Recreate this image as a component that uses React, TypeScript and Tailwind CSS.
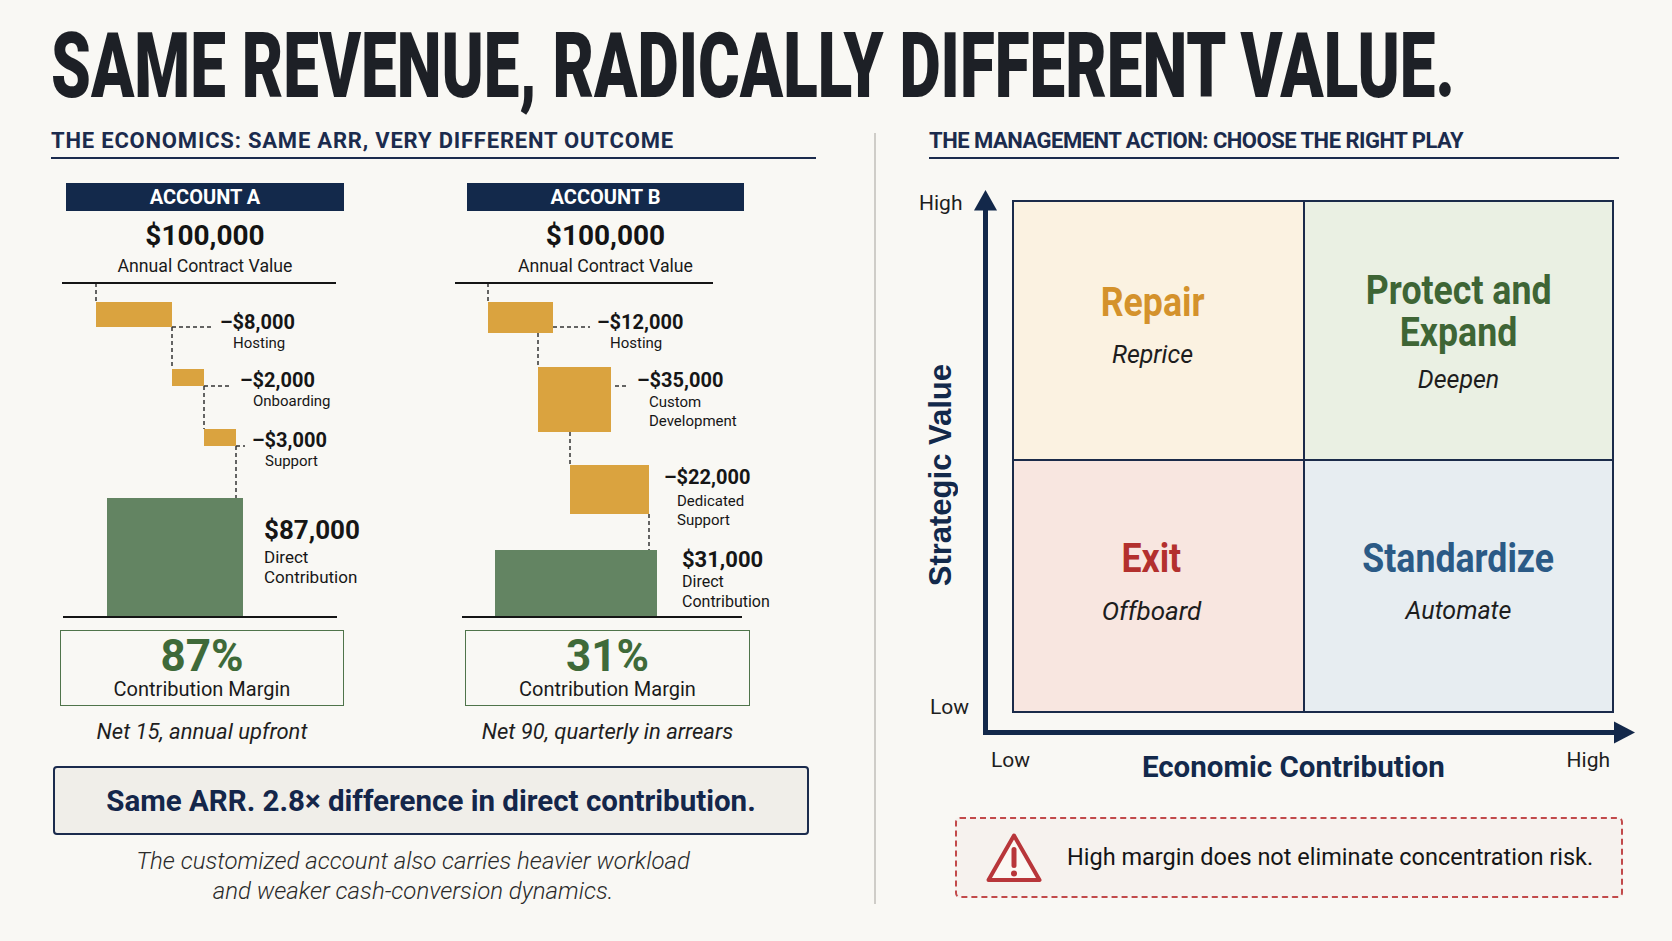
import React from "react";

type Seg = [number, number, number, number];
type Bar = { x: number; y: number; w: number; h: number; green?: boolean };
type Lbl = { x: number; y: number; t: string; s: number; b?: boolean };

type Chart = {
  vx: number;
  solid: Seg[];
  dashed: Seg[];
  bars: Bar[];
  labels: Lbl[];
};

const chartA: Chart = {
  vx: 56,
  solid: [
    [62, 283, 336, 283],
    [63, 617, 337, 617],
  ],
  dashed: [
    [96, 283, 96, 302],
    [172, 327, 212, 327],
    [172, 327, 172, 369],
    [204, 386, 230, 386],
    [204, 386, 204, 429],
    [236, 446, 245, 446],
    [236, 446, 236, 498],
  ],
  bars: [
    { x: 96, y: 302, w: 76, h: 25 },
    { x: 172, y: 369, w: 32, h: 17 },
    { x: 204, y: 429, w: 32, h: 17 },
    { x: 107, y: 498, w: 136, h: 119, green: true },
  ],
  labels: [
    { x: 220, y: 329, t: "\u2013$8,000", s: 20, b: true },
    { x: 233, y: 348, t: "Hosting", s: 15 },
    { x: 240, y: 387, t: "\u2013$2,000", s: 20, b: true },
    { x: 253, y: 406, t: "Onboarding", s: 15 },
    { x: 252, y: 447, t: "\u2013$3,000", s: 20, b: true },
    { x: 265, y: 466, t: "Support", s: 15 },
    { x: 264, y: 539, t: "$87,000", s: 26, b: true },
    { x: 264, y: 563, t: "Direct", s: 17 },
    { x: 264, y: 583, t: "Contribution", s: 17 },
  ],
};

const chartB: Chart = {
  vx: 450,
  solid: [
    [455, 283, 713, 283],
    [462, 617, 742, 617],
  ],
  dashed: [
    [488, 283, 488, 302],
    [553, 327, 590, 327],
    [538, 333, 538, 367],
    [615, 386, 627, 386],
    [570, 432, 570, 465],
    [649, 514, 649, 550],
  ],
  bars: [
    { x: 488, y: 302, w: 65, h: 31 },
    { x: 538, y: 367, w: 73, h: 65 },
    { x: 570, y: 465, w: 79, h: 49 },
    { x: 495, y: 550, w: 162, h: 67, green: true },
  ],
  labels: [
    { x: 597, y: 329, t: "\u2013$12,000", s: 20, b: true },
    { x: 610, y: 348, t: "Hosting", s: 15 },
    { x: 637, y: 387, t: "\u2013$35,000", s: 20, b: true },
    { x: 649, y: 407, t: "Custom", s: 15 },
    { x: 649, y: 426, t: "Development", s: 15 },
    { x: 664, y: 484, t: "\u2013$22,000", s: 20, b: true },
    { x: 677, y: 506, t: "Dedicated", s: 15 },
    { x: 677, y: 525, t: "Support", s: 15 },
    { x: 682, y: 567, t: "$31,000", s: 22, b: true },
    { x: 682, y: 587, t: "Direct", s: 16 },
    { x: 682, y: 607, t: "Contribution", s: 16 },
  ],
};

function Waterfall({ c }: { c: Chart }) {
  return (
    <svg
      width={340}
      height={345}
      viewBox={`${c.vx} 276 340 345`}
      className="block overflow-visible"
    >
      {c.bars.map((b, i) => (
        <rect key={i} x={b.x} y={b.y} width={b.w} height={b.h} fill={b.green ? "#638462" : "#daa33f"} />
      ))}
      {c.dashed.map((d, i) => (
        <line key={i} x1={d[0]} y1={d[1]} x2={d[2]} y2={d[3]} stroke="#333333" strokeWidth={1.5} strokeDasharray="4 3" />
      ))}
      {c.solid.map((d, i) => (
        <line key={i} x1={d[0]} y1={d[1]} x2={d[2]} y2={d[3]} stroke="#151515" strokeWidth={2.2} />
      ))}
      {c.labels.map((l, i) => (
        <text
          key={i}
          x={l.x}
          y={l.y}
          fontFamily="Roboto, sans-serif"
          fontSize={l.s}
          fontWeight={l.b ? 700 : 400}
          fill="#161616"
        >
          {l.t}
        </text>
      ))}
    </svg>
  );
}

function Account({
  name,
  chart,
  boxMl,
  boxW,
  mMl,
  mW,
  pct,
  terms,
}: {
  name: string;
  chart: Chart;
  boxMl: string;
  boxW: string;
  mMl: string;
  mW: string;
  pct: string;
  terms: string;
}) {
  return (
    <div className="w-[340px] shrink-0">
      <div className={`${boxMl} ${boxW} flex flex-col items-center`}>
        <div className="w-full h-[28px] bg-[#13294b] flex items-center justify-center text-white font-bold text-[20px] leading-none">
          {name}
        </div>
        <div className="mt-[11px] text-[28px] leading-none font-bold text-[#141414]">$100,000</div>
        <div className="mt-[8px] text-[17.7px] leading-none text-[#1a1a1a]">Annual Contract Value</div>
      </div>
      <Waterfall c={chart} />
      <div className={`${mMl} ${mW}`}>
        <div className="mt-[9px] h-[76px] border-[1.5px] border-[#4f744a] flex flex-col items-center pt-[3px]">
          <div className="text-[44px] leading-none font-bold text-[#3f6a39]">{pct}</div>
          <div className="mt-[1px] text-[20px] leading-none text-[#1a1a1a]">Contribution Margin</div>
        </div>
        <div className="mt-[15px] text-center text-[22px] leading-none italic text-[#1f1f1f] whitespace-nowrap">
          {terms}
        </div>
      </div>
    </div>
  );
}

function WarnIcon() {
  return (
    <svg width={58} height={52} viewBox="0 0 58 52" className="block shrink-0">
      <path
        d="M29 3.5 L54.5 48 L3.5 48 Z"
        fill="#fbf8f4"
        stroke="#b8363a"
        strokeWidth={4}
        strokeLinejoin="round"
      />
      <rect x={26.5} y={15} width={5} height={21} rx={2.5} fill="#b8363a" />
      <circle cx={29} cy={41.5} r={3} fill="#b8363a" />
    </svg>
  );
}

export default function App() {
  return (
    <div className="w-[1672px] h-[941px] overflow-hidden bg-[#f9f8f4] text-[#1a1a1a] [font-family:Roboto,sans-serif]">
      <div className="pt-[22px] pl-[51px] h-[112px]">
        <h1 className="inline-block origin-left scale-x-[0.708] whitespace-nowrap text-[90px] leading-none font-black text-[#1d2026]">
          SAME REVENUE, RADICALLY DIFFERENT VALUE.
        </h1>
      </div>

      <div className="flex mt-[18px]">
        {/* Left column */}
        <div className="w-[816px] pl-[51px] shrink-0">
          <div className="border-b-2 border-[#1b2b4d] pb-[5px]">
            <h2 className="text-[22px] leading-none font-bold text-[#1b2b4d] whitespace-nowrap tracking-[0.8px]">
              THE ECONOMICS: SAME ARR, VERY DIFFERENT OUTCOME
            </h2>
          </div>

          <div className="flex mt-[24px]">
            <div className="ml-[5px]">
              <Account
                name="ACCOUNT A"
                chart={chartA}
                boxMl="ml-[10px]"
                boxW="w-[278px]"
                mMl="ml-[4px]"
                mW="w-[284px]"
                pct="87%"
                terms="Net 15, annual upfront"
              />
            </div>
            <div className="ml-[54px]">
              <Account
                name="ACCOUNT B"
                chart={chartB}
                boxMl="ml-[17px]"
                boxW="w-[277px]"
                mMl="ml-[15px]"
                mW="w-[285px]"
                pct="31%"
                terms="Net 90, quarterly in arrears"
              />
            </div>
          </div>

          <div className="ml-[2px] mt-[23px] w-[756px] h-[69px] border-2 border-[#1b2b4d] rounded-[4px] bg-[#f0eee9] flex items-center justify-center pt-[3px]">
            <span className="text-[29.5px] leading-none font-bold text-[#14264a]">
              Same ARR. 2.8× difference in direct contribution.
            </span>
          </div>

          <div className="mt-[11px] w-[724px] text-center text-[24px] leading-[30px] italic font-light text-[#2a2a2a]">
            The customized account also carries heavier workload
            <br />
            and weaker cash-conversion dynamics.
          </div>
        </div>

        {/* Divider */}
        <div className="ml-[58px] mt-[3px] w-[1.5px] h-[771px] bg-[#cfcdc8] shrink-0" />

        {/* Right column */}
        <div className="ml-[39.5px] w-[757px] shrink-0">
          <div className="ml-[14px] w-[690px] border-b-2 border-[#1b2b4d] pb-[5px]">
            <h2 className="text-[22px] leading-none font-bold text-[#1b2b4d] whitespace-nowrap tracking-[-0.5px]">
              THE MANAGEMENT ACTION: CHOOSE THE RIGHT PLAY
            </h2>
          </div>

          <div className="relative mt-[26px]">
            <svg width={757} height={560} className="absolute left-0 top-0 pointer-events-none">
              <line x1={70.5} y1={22} x2={70.5} y2={550} stroke="#13284a" strokeWidth={5} />
              <polygon points="70.5,5 59,25.5 82,25.5" fill="#13284a" />
              <line x1={68} y1={547.5} x2={702} y2={547.5} stroke="#13284a" strokeWidth={5} />
              <polygon points="720,547.5 699,536.5 699,558.5" fill="#13284a" />
            </svg>

            <div className="flex pt-[15px]">
              <div className="w-[97px] h-[513px] flex flex-col shrink-0">
                <div className="-mt-[7px] ml-[4px] text-[21px] leading-none text-[#1e1e1e]">High</div>
                <div className="flex-1 flex items-center pt-[39px]">
                  <div className="ml-[9.5px] [writing-mode:vertical-rl] rotate-180 whitespace-nowrap text-[31px] leading-none font-bold text-[#13294b] [font-family:'Liberation_Sans',Arial,sans-serif]">
                    Strategic Value
                  </div>
                </div>
                <div className="ml-[15px] -mb-[5px] text-[21px] leading-none text-[#1e1e1e]">Low</div>
              </div>

              <div className="w-[602px] h-[513px] grid grid-cols-[289px_307px] grid-rows-[257px_250px] gap-[2px] bg-[#1b2b4a] border-2 border-[#1b2b4a] shrink-0">
                <div className="bg-[#fbf2e1] flex flex-col items-center pt-[80px] pr-[12px]">
                  <div className="scale-x-[0.87] text-[41px] leading-none font-bold text-[#d4922c] whitespace-nowrap">Repair</div>
                  <div className="mt-[19px] text-[25px] leading-none italic text-[#1d1d1d]">Reprice</div>
                </div>
                <div className="bg-[#eaf0e3] flex flex-col items-center pt-[68px]">
                  <div className="scale-x-[0.87] text-[41px] leading-none font-bold text-[#3e6535] whitespace-nowrap">
                    Protect and
                  </div>
                  <div className="mt-[1px] scale-x-[0.87] text-[41px] leading-none font-bold text-[#3e6535] whitespace-nowrap">
                    Expand
                  </div>
                  <div className="mt-[14px] text-[25px] leading-none italic text-[#1d1d1d]">Deepen</div>
                </div>
                <div className="bg-[#f8e6e0] flex flex-col items-center pt-[77px] pr-[14px]">
                  <div className="scale-x-[0.87] text-[41px] leading-none font-bold text-[#b3302e] whitespace-nowrap">Exit</div>
                  <div className="mt-[19px] text-[26px] leading-none italic text-[#1d1d1d]">Offboard</div>
                </div>
                <div className="bg-[#e7edf1] flex flex-col items-center pt-[77px]">
                  <div className="scale-x-[0.87] text-[41px] leading-none font-bold text-[#2b5a86] whitespace-nowrap">Standardize</div>
                  <div className="mt-[19px] text-[25px] leading-none italic text-[#1d1d1d]">Automate</div>
                </div>
              </div>
            </div>

            <div className="flex items-start mt-[37px] pl-[76px] pr-[62px]">
              <div className="text-[21px] leading-none text-[#1e1e1e]">Low</div>
              <div className="flex-1 mt-[3px] pr-[10px] text-center text-[29.5px] leading-none font-bold text-[#13294b]">
                Economic Contribution
              </div>
              <div className="text-[21px] leading-none text-[#1e1e1e]">High</div>
            </div>
          </div>

          <div className="mt-[34.5px] ml-[40px] w-[668px] h-[81px] border-2 border-dashed border-[#c24a4a] rounded-[5px] bg-[#f6f2ee] flex items-center">
            <div className="ml-[28px]">
              <WarnIcon />
            </div>
            <div className="ml-[24px] text-[23.5px] leading-none text-[#151515] whitespace-nowrap">
              High margin does not eliminate concentration risk.
            </div>
          </div>
        </div>
      </div>
    </div>
  );
}
